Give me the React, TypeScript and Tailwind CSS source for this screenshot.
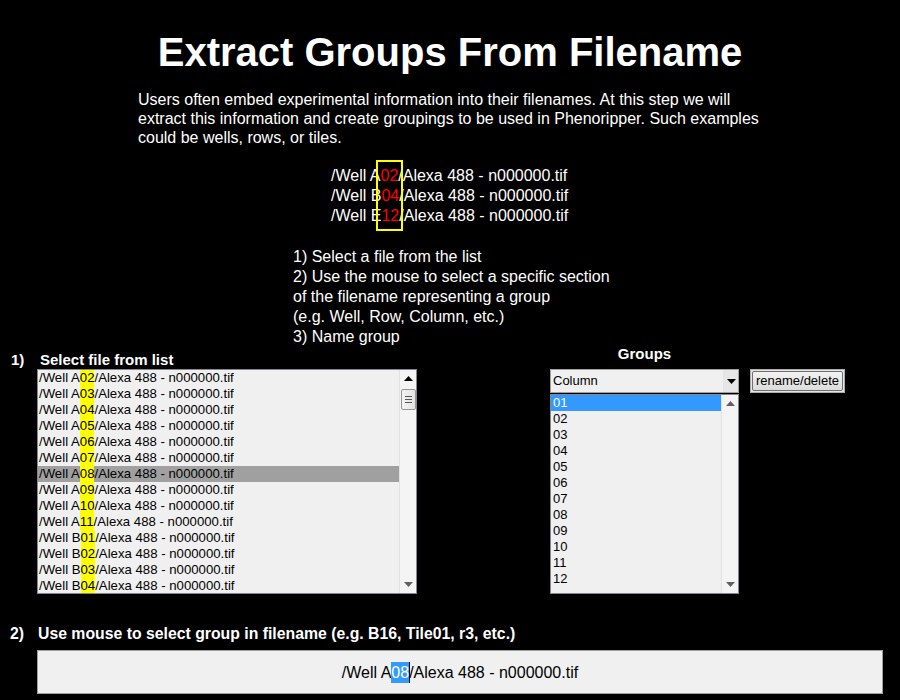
import React from 'react';

const FONT = { fontFamily: '"Liberation Sans", Arial, sans-serif' };

const files = ['A02', 'A03', 'A04', 'A05', 'A06', 'A07', 'A08', 'A09', 'A10', 'A11', 'B01', 'B02', 'B03', 'B04'];
const groups = ['01', '02', '03', '04', '05', '06', '07', '08', '09', '10', '11', '12'];

function UpArrow({ color = '#000' }: { color?: string }) {
  return (
    <svg width="9" height="5" viewBox="0 0 9 5">
      <path d="M0 5 L4.5 0 L9 5 Z" fill={color} />
    </svg>
  );
}

function DownArrow({ color = '#000' }: { color?: string }) {
  return (
    <svg width="9" height="5" viewBox="0 0 9 5">
      <path d="M0 0 L9 0 L4.5 5 Z" fill={color} />
    </svg>
  );
}

function ScrollBar({ thumb }: { thumb: boolean }) {
  return (
    <div className="w-[17px] shrink-0 bg-[#f4f4f4] border-l border-[#e2e2e2] flex flex-col items-center">
      <div className="h-[17px] flex items-center justify-center">
        <UpArrow color={thumb ? '#000' : '#606060'} />
      </div>
      {thumb && (
        <div className="w-[15px] h-[21px] mt-[2px] rounded-[2px] border border-[#959595] bg-gradient-to-r from-[#f3f3f3] to-[#e2e2e2] flex flex-col items-center justify-center gap-[2px]">
          <div className="w-[7px] h-px bg-[#555]" />
          <div className="w-[7px] h-px bg-[#555]" />
          <div className="w-[7px] h-px bg-[#555]" />
        </div>
      )}
      <div className="flex-1" />
      <div className="h-[17px] flex items-center justify-center">
        <DownArrow color="#606060" />
      </div>
    </div>
  );
}

export default function App() {
  return (
    <div className="w-[900px] h-[700px] bg-black text-white overflow-hidden" style={FONT}>
      <h1 className="pt-[29px] text-center text-[40px] leading-[46px] font-bold">Extract Groups From Filename</h1>

      <p className="ml-[138px] mt-[15px] text-[16px] leading-[19px] whitespace-nowrap">
        Users often embed experimental information into their filenames. At this step we will
        <br />
        extract this information and create groupings to be used in Phenoripper. Such examples
        <br />
        could be wells, rows, or tiles.
      </p>

      <div className="relative ml-[331px] mt-[19px] w-fit text-[16px] leading-[20px] whitespace-nowrap">
        {[['A', '02'], ['B', '04'], ['E', '12']].map(([w, n]) => (
          <div key={w + n}>
            /Well {w}
            <span className="text-[#ff0000]">{n}</span>/Alexa 488 - n000000.tif
          </div>
        ))}
        <div className="absolute left-[45px] top-[-6px] w-[27px] h-[71px] border-2 border-[#ffff00]" />
      </div>

      <div className="ml-[293px] mt-[21px] text-[16px] leading-[20px] whitespace-nowrap">
        <div>1) Select a file from the list</div>
        <div>2) Use the mouse to select a specific section</div>
        <div>of the filename representing a group</div>
        <div>(e.g. Well, Row, Column, etc.)</div>
        <div>3) Name group</div>
      </div>

      <div className="flex items-start">
        <div className="ml-[11px] w-[406px]">
          <div className="mt-[4px] flex text-[15px] leading-[18px] font-bold">
            <span className="w-[29px]">1)</span>
            <span>Select file from list</span>
          </div>
          <div className="ml-[26px] w-[380px] h-[225px] border border-[#828790] bg-[#f0f0f0] flex text-black">
            <div className="flex-1 overflow-hidden text-[13.2px] leading-4">
              {files.map((f) => (
                <div key={f} className={`h-4 pl-[1px] whitespace-nowrap ${f === 'A08' ? 'bg-[#a0a0a0]' : ''}`}>
                  /Well {f[0]}
                  <span className="inline-block h-4 bg-[#ffff00]">{f.slice(1)}</span>/Alexa 488 - n000000.tif
                </div>
              ))}
            </div>
            <ScrollBar thumb />
          </div>
        </div>

        <div className="ml-[133px] flex items-start gap-[11px]">
          <div className="w-[189px]">
            <div className="text-center text-[15px] leading-[14px] font-bold">Groups</div>
            <div className="mt-[8px] h-[24px] border border-[#a0a0a0] bg-[#f0f0f0] flex items-center text-black text-[13px]">
              <span className="flex-1 pl-[2px]">Column</span>
              <div className="w-[15px] h-full border-l border-[#e4e4e4] bg-[#e6e6e6] flex items-center justify-center">
                <DownArrow />
              </div>
            </div>
            <div className="mt-[1px] h-[200px] border border-[#828790] bg-[#f0f0f0] flex text-black">
              <div className="flex-1 text-[13px] leading-4">
                {groups.map((g) => (
                  <div key={g} className={`h-4 pl-[2px] ${g === '01' ? 'bg-[#3399ff] text-white' : ''}`}>
                    {g}
                  </div>
                ))}
              </div>
              <ScrollBar thumb={false} />
            </div>
          </div>
          <button className="mt-[22px] w-[95px] h-[24px] border border-[#adadad] bg-[#e4e4e4] p-px">
            <div className="h-full rounded-[2px] border border-[#707070] bg-gradient-to-b from-[#f2f2f2] to-[#dcdcdc] flex items-center justify-center text-black text-[13px]">
              rename/delete
            </div>
          </button>
        </div>
      </div>

      <div className="mt-[31px] ml-[10px] flex text-[15.8px] leading-[18px] font-bold">
        <span className="w-[28px]">2)</span>
        <span>Use mouse to select group in filename (e.g. B16, Tile01, r3, etc.)</span>
      </div>

      <div className="mt-[7px] ml-[37px] w-[846px] h-[44px] border border-[#a0a0a0] bg-[#f0f0f0] flex items-center justify-center text-black text-[16px] leading-[21px] whitespace-nowrap">
        <span>/Well A</span>
        <span className="bg-[#3399ff] text-white">08</span>
        <span className="inline-block w-px h-[21px] bg-black -mr-px" />
        <span>/Alexa 488 - n000000.tif</span>
      </div>
    </div>
  );
}
